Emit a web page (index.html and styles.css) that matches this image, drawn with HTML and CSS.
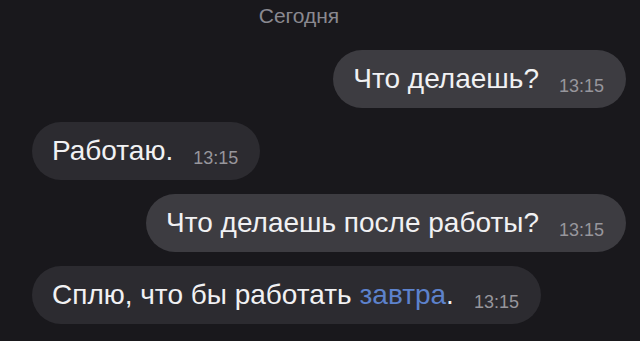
FILE: index.html
```html
<!DOCTYPE html>
<html lang="ru">
<head>
<meta charset="utf-8">
<title>Чат</title>
<link rel="stylesheet" href="styles.css">
</head>
<body>
<main class="chat">
  <div class="date">Сегодня</div>
  <div class="msg out"><span class="text">Что делаешь?</span><span class="time">13:15</span></div>
  <div class="msg in"><span class="text">Работаю.</span><span class="time">13:15</span></div>
  <div class="msg out"><span class="text">Что делаешь после работы?</span><span class="time">13:15</span></div>
  <div class="msg in"><span class="text">Сплю, что бы работать <span class="link">завтра</span>.</span><span class="time">13:15</span></div>
</main>
</body>
</html>
```
FILE: styles.css
```css
html, body {
  margin: 0;
  padding: 0;
  background: #19181c;
  height: 100%;
  overflow: hidden;
}
.chat {
  display: flex;
  flex-direction: column;
  padding: 4px 14px 0 32px;
  font-family: "Liberation Sans", Arial, sans-serif;
}
.date {
  align-self: center;
  margin-right: 60px;
  color: #8a8990;
  font-size: 21px;
  line-height: 24px;
  height: 24px;
  margin-bottom: 22px;
}
.msg {
  display: flex;
  align-items: center;
  height: 58px;
  box-sizing: border-box;
  border-radius: 29px;
  padding: 0 22px 0 20px;
  margin-bottom: 14px;
  white-space: nowrap;
}
.msg.out {
  align-self: flex-end;
  background: #3d3c41;
}
.msg.in {
  align-self: flex-start;
  background: #2c2b30;
}
.text {
  color: #f1f1f3;
  font-size: 28px;
  line-height: 32px;
}
.time {
  color: #97969c;
  font-size: 18px;
  margin-left: 20px;
  position: relative;
  top: 7px;
}
.link {
  color: #5d82cc;
}
```
